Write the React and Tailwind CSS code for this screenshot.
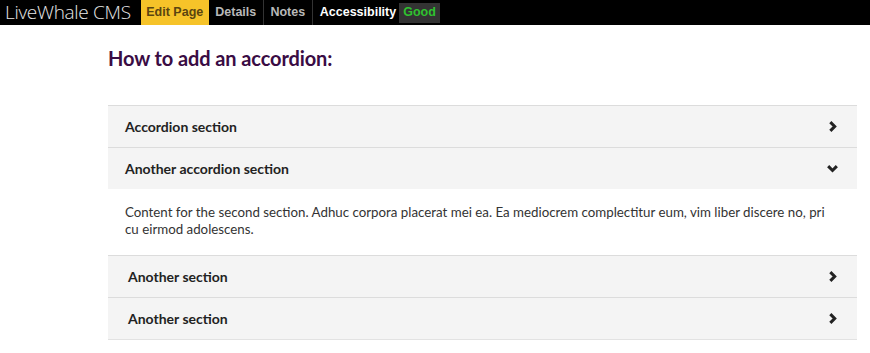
import React from 'react';

const Chevron = ({ open }) => (
  <svg width="13" height="13" viewBox="0 0 12 12" className="text-[#222]">
    {open ? (
      <path d="M2 3.8 L6 7.8 L10 3.8" fill="none" stroke="currentColor" strokeWidth="2.8" strokeLinecap="butt" />
    ) : (
      <path d="M4 2 L8 6 L4 10" fill="none" stroke="currentColor" strokeWidth="2.8" strokeLinecap="butt" />
    )}
  </svg>
);

const sections = [
  { title: 'Accordion section', open: false, pad: 'pl-[17px]' },
  {
    title: 'Another accordion section',
    open: true,
    pad: 'pl-[17px]',
    body: 'Content for the second section. Adhuc corpora placerat mei ea. Ea mediocrem complectitur eum, vim liber discere no, pri cu eirmod adolescens.',
  },
  { title: 'Another section', open: false, pad: 'pl-[20px]' },
  { title: 'Another section', open: false, pad: 'pl-[20px]' },
];

export default function App() {
  return (
    <div className="w-[870px] h-[353px] bg-white overflow-hidden font-['Lato',sans-serif]">
      {/* toolbar */}
      <div className="h-[25px] bg-black flex items-stretch">
        <div className="pl-[5px] pr-[10px] flex items-center text-[19px] leading-none text-[#e6e6e6] font-['Open_Sans',sans-serif] font-light tracking-[-0.3px]">
          LiveWhale CMS
        </div>
        <div className="flex items-stretch font-['Liberation_Sans',Arial,sans-serif] font-bold text-[12.5px]">
          <div className="w-[68px] bg-[#f6c329] text-[#5b4510] flex items-center justify-center">Edit Page</div>
          <div className="w-[55px] text-[#b8b8b8] flex items-center justify-center border-r border-[#333]">Details</div>
          <div className="w-[49px] text-[#b8b8b8] flex items-center justify-center border-r border-[#333]">Notes</div>
          <div className="pl-[7px] pr-[3px] text-white flex items-center">Accessibility</div>
          <div className="flex items-center">
            <span className="bg-[#333] text-[#2fc12f] h-[20px] px-[4px] flex items-center">Good</span>
          </div>
        </div>
      </div>

      <div className="pl-[108px] pr-[13px]">
        <h1 className="mt-[20px] text-[20px] leading-[26px] font-bold text-[#3a0c44] tracking-[-0.1px]">
          How to add an accordion:
        </h1>

        <div className="mt-[34px] border-b border-[#e2e2e2]">
          {sections.map((s, i) => (
            <div key={i}>
              <div className={`h-[42px] bg-[#f4f4f4] border-t border-[#dcdcdc] flex items-center justify-between ${s.pad} pr-[18px]`}>
                <span className="text-[14px] font-bold text-[#222]">{s.title}</span>
                <Chevron open={s.open} />
              </div>
              {s.open && (
                <div className="bg-white pl-[17px] pr-[22px] pt-[15px] pb-[17px] text-[13.3px] leading-[17px] text-[#333]">
                  {s.body}
                </div>
              )}
            </div>
          ))}
        </div>
      </div>
    </div>
  );
}
